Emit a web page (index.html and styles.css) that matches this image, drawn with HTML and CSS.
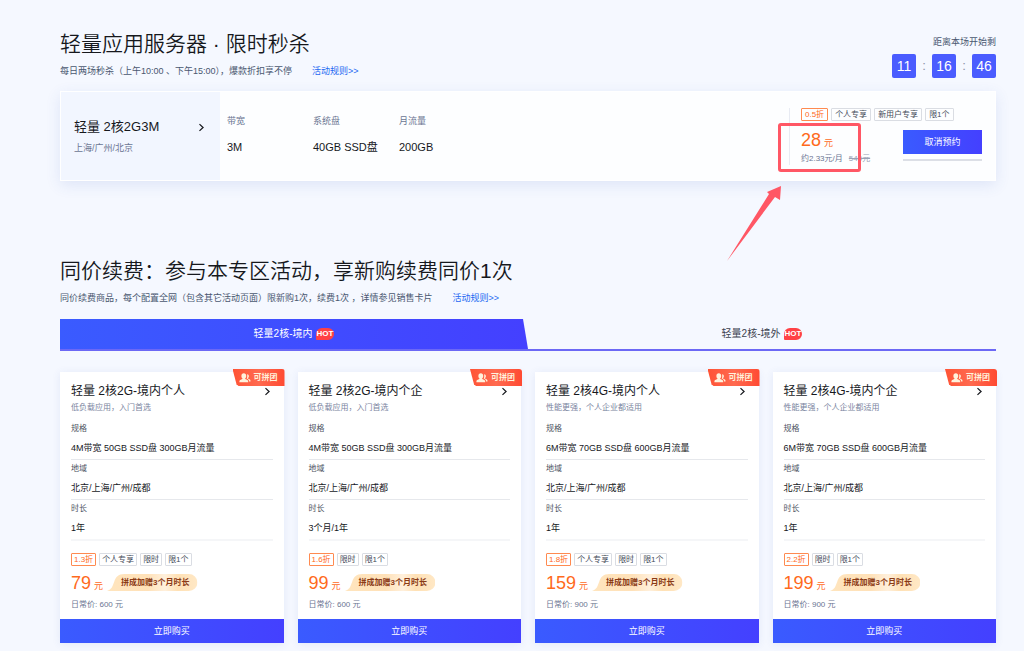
FILE: index.html
```html
<!DOCTYPE html>
<html lang="zh-CN">
<head>
<meta charset="utf-8">
<meta name="viewport" content="width=device-width, initial-scale=1">
<title>轻量应用服务器 · 限时秒杀</title>
<link rel="stylesheet" href="styles.css">
</head>
<body>
<svg class="sprite" aria-hidden="true">
  <symbol id="chevron" viewBox="0 0 8 8"><path d="M2.2 1 5.4 4 2.2 7" fill="none" stroke="currentColor" stroke-width="1.1"/></symbol>
  <symbol id="people" viewBox="0 0 12 10"><path d="M4.8.3c1.5 0 2.4 1.1 2.4 2.6 0 1-.4 1.9-1 2.4v.7c1.700.5 3 1.200 3 2.400v.9H.4v-.9C.4 7.200 1.700 6.500 3.400 6v-.7c-.6-.5-1-1.400-1-2.400C2.400 1.400 3.300.3 4.800.3z"/><path d="M8 1.200c1.200 0 1.900.9 1.900 2 0 .8-.3 1.500-.8 1.900v.6c1.400.4 2.400 1 2.400 2v.9h-1.400c0-1.300-.8-2.300-2.400-3 .6-.9.800-2.600.3-4.400z"/></symbol>
  <symbol id="pill" viewBox="0 0 89 17" preserveAspectRatio="none"><path d="M0 17C5 15 5 13 7 8 8.500 3 11 0 17 0H80.500a8.500 8.500 0 0 1 0 17z" fill="url(#gold)"/></symbol>
  <linearGradient id="gold"><stop offset="0" stop-color="#ffe5be"/><stop offset=".45" stop-color="#ffe1b8"/><stop offset=".64" stop-color="#fff0dc"/><stop offset=".78" stop-color="#ffe1b5"/><stop offset="1" stop-color="#ffe8c6"/></linearGradient>
</svg>
<main class="page">
  <section class="seckill">
    <header class="seckill-head">
      <div>
        <h1 class="title">轻量应用服务器 · 限时秒杀</h1>
        <p class="sub">每日两场秒杀（上午10:00 、下午15:00），爆款折扣享不停<a class="rules" href="#rules">活动规则&gt;&gt;</a></p>
      </div>
      <div class="timer">
        <span class="timer-label">距离本场开始剩</span>
        <div class="clock"><b class="digit">11</b><i class="colon">:</i><b class="digit">16</b><i class="colon">:</i><b class="digit">46</b></div>
      </div>
    </header>
    <article class="deal">
      <a class="deal-name" href="#deal">
        <span class="deal-title">轻量 2核2G3M<svg class="chevron"><use href="#chevron"/></svg></span>
        <span class="deal-place">上海/广州/北京</span>
      </a>
      <dl class="deal-specs">
        <div><dt>带宽</dt><dd>3M</dd></div>
        <div><dt>系统盘</dt><dd>40GB SSD盘</dd></div>
        <div><dt>月流量</dt><dd>200GB</dd></div>
      </dl>
      <div class="deal-buy">
        <div class="tags"><span class="tag hot">0.5折</span><span class="tag">个人专享</span><span class="tag">新用户专享</span><span class="tag">限1个</span></div>
        <div class="deal-row">
          <div>
            <p class="price">28<small>元</small></p>
            <p class="monthly">约2.33元/月<del>540元</del></p>
          </div>
          <div class="reserve"><button class="btn" type="button">取消预约</button><span class="stock"></span></div>
        </div>
        <div class="mark" aria-hidden="true"><svg class="arrow" viewBox="0 0 54 75"><path d="M54 0 53 14 48 11 0 75 42 8 40 6z" fill="#ff5765"/></svg></div>
      </div>
    </article>
  </section>

  <section class="renew">
    <h2 class="title">同价续费：参与本专区活动，享新购续费同价1次</h2>
    <p class="sub">同价续费商品，每个配置全网（包含其它活动页面）限新购1次，续费1次 ，详情参见销售卡片<a class="rules" href="#renew-rules">活动规则&gt;&gt;</a></p>
    <div class="tabs" role="tablist">
      <button class="tab active" type="button" role="tab" aria-selected="true">轻量2核-境内<span class="hot-badge">HOT</span></button>
      <button class="tab" type="button" role="tab" aria-selected="false">轻量2核-境外<span class="hot-badge">HOT</span></button>
    </div>
    <div class="cards">
      <article class="card">
        <span class="ribbon"><svg class="people"><use href="#people"/></svg>可拼团</span>
        <div class="card-body">
          <h3 class="card-title">轻量 2核2G-境内个人<svg class="chevron"><use href="#chevron"/></svg></h3>
          <p class="desc">低负载应用，入门首选</p>
          <dl class="specs">
            <div><dt>规格</dt><dd>4M带宽 50GB SSD盘 300GB月流量</dd></div>
            <div><dt>地域</dt><dd>北京/上海/广州/成都</dd></div>
            <div><dt>时长</dt><dd>1年</dd></div>
          </dl>
          <div class="tags"><span class="tag hot">1.3折</span><span class="tag">个人专享</span><span class="tag">限时</span><span class="tag">限1个</span></div>
          <div class="price-row"><p class="price">79<small>元</small></p><span class="pill"><svg class="pill-bg"><use href="#pill"/></svg><span class="pill-text">拼成加赠3个月时长</span></span></div>
          <p class="daily">日常价: 600 元</p>
        </div>
        <button class="btn" type="button">立即购买</button>
      </article>
      <article class="card">
        <span class="ribbon"><svg class="people"><use href="#people"/></svg>可拼团</span>
        <div class="card-body">
          <h3 class="card-title">轻量 2核2G-境内个企<svg class="chevron"><use href="#chevron"/></svg></h3>
          <p class="desc">低负载应用，入门首选</p>
          <dl class="specs">
            <div><dt>规格</dt><dd>4M带宽 50GB SSD盘 300GB月流量</dd></div>
            <div><dt>地域</dt><dd>北京/上海/广州/成都</dd></div>
            <div><dt>时长</dt><dd>3个月/1年</dd></div>
          </dl>
          <div class="tags"><span class="tag hot">1.6折</span><span class="tag">限时</span><span class="tag">限1个</span></div>
          <div class="price-row"><p class="price">99<small>元</small></p><span class="pill"><svg class="pill-bg"><use href="#pill"/></svg><span class="pill-text">拼成加赠3个月时长</span></span></div>
          <p class="daily">日常价: 600 元</p>
        </div>
        <button class="btn" type="button">立即购买</button>
      </article>
      <article class="card">
        <span class="ribbon"><svg class="people"><use href="#people"/></svg>可拼团</span>
        <div class="card-body">
          <h3 class="card-title">轻量 2核4G-境内个人<svg class="chevron"><use href="#chevron"/></svg></h3>
          <p class="desc">性能更强，个人企业都适用</p>
          <dl class="specs">
            <div><dt>规格</dt><dd>6M带宽 70GB SSD盘 600GB月流量</dd></div>
            <div><dt>地域</dt><dd>北京/上海/广州/成都</dd></div>
            <div><dt>时长</dt><dd>1年</dd></div>
          </dl>
          <div class="tags"><span class="tag hot">1.8折</span><span class="tag">个人专享</span><span class="tag">限时</span><span class="tag">限1个</span></div>
          <div class="price-row"><p class="price">159<small>元</small></p><span class="pill"><svg class="pill-bg"><use href="#pill"/></svg><span class="pill-text">拼成加赠3个月时长</span></span></div>
          <p class="daily">日常价: 900 元</p>
        </div>
        <button class="btn" type="button">立即购买</button>
      </article>
      <article class="card">
        <span class="ribbon"><svg class="people"><use href="#people"/></svg>可拼团</span>
        <div class="card-body">
          <h3 class="card-title">轻量 2核4G-境内个企<svg class="chevron"><use href="#chevron"/></svg></h3>
          <p class="desc">性能更强，个人企业都适用</p>
          <dl class="specs">
            <div><dt>规格</dt><dd>6M带宽 70GB SSD盘 600GB月流量</dd></div>
            <div><dt>地域</dt><dd>北京/上海/广州/成都</dd></div>
            <div><dt>时长</dt><dd>1年</dd></div>
          </dl>
          <div class="tags"><span class="tag hot">2.2折</span><span class="tag">限时</span><span class="tag">限1个</span></div>
          <div class="price-row"><p class="price">199<small>元</small></p><span class="pill"><svg class="pill-bg"><use href="#pill"/></svg><span class="pill-text">拼成加赠3个月时长</span></span></div>
          <p class="daily">日常价: 900 元</p>
        </div>
        <button class="btn" type="button">立即购买</button>
      </article>
    </div>
  </section>
</main>
</body>
</html>
```
FILE: styles.css
```css
* { box-sizing: border-box; margin: 0; padding: 0; }
body {
  background: #f5f8ff;
  color: #16181d;
  font: 9px/14px "Liberation Sans", "Noto Sans CJK SC", sans-serif;
}
a { color: inherit; text-decoration: none; }
button { font: inherit; border: 0; cursor: pointer; }
.sprite { position: absolute; width: 0; height: 0; }
.page { padding: 28px 28px 9px 60px; }

.title {
  font-size: 21px;
  font-weight: 350;
  line-height: 32px;
}
.sub { margin-top: 4px; color: #495770; }
.rules { margin-left: 20px; color: #2468f2; }

.seckill-head { display: flex; justify-content: space-between; }
.timer { display: flex; flex-direction: column; align-items: flex-end; padding-top: 7px; color: #495770; }
.clock { display: flex; align-items: center; margin-top: 5px; }
.digit {
  width: 24px;
  border-radius: 2px;
  background: #4a5cff;
  color: #fff;
  font-size: 14px;
  font-weight: 400;
  line-height: 24px;
  text-align: center;
}
.colon { width: 16px; color: #8a93a8; font-size: 13px; font-style: normal; text-align: center; }

.deal {
  display: flex;
  min-height: 90px;
  margin-top: 13px;
  border: 1px solid #fff;
  background: #fdfeff;
  box-shadow: 0 4px 14px rgba(60, 90, 190, .12);
}
.deal-name { width: 159px; padding: 25px 14px 0 13px; background: #f2f6ff; }
.deal-title { display: flex; align-items: center; justify-content: space-between; font-size: 13px; line-height: 20px; }
.deal-place { display: block; margin-top: 4px; color: #6b7592; }
.chevron { flex: none; width: 9px; height: 9px; }
.deal-specs { display: flex; flex: 1; padding: 22px 0 0 7px; }
.deal-specs div { width: 86px; }
.deal-specs dt { color: #6b7592; }
.deal-specs dd { margin-top: 12px; font-size: 11px; white-space: nowrap; }
.deal-buy { position: relative; align-self: flex-start; margin-top: 16px; padding: 0 13px 0 11px; border-left: 1px solid #e8ebf3; }
.deal-row { display: flex; align-items: flex-start; justify-content: space-between; width: 181px; }
.price { color: #ff6a1c; font-size: 18px; line-height: 18px; }
.price small { margin-left: 3px; font-size: 9px; }
.deal-row .price { margin-top: 10px; }
.monthly { margin-top: 1px; color: #6b7592; font-size: 8px; line-height: 12px; white-space: nowrap; }
.monthly del { margin-left: 6px; color: #9aa2b5; }
.reserve { width: 79px; margin-top: 9px; }
.stock { display: block; height: 2px; margin-top: 5px; background: #dcdfe6; }
.mark { position: absolute; left: -12px; top: 15px; width: 83px; height: 49px; border: 3px solid #ff5765; border-radius: 3px; }
.arrow { position: absolute; right: 77px; top: 60px; width: 54px; height: 75px; }

.tags { display: flex; gap: 3px; }
.tag { padding: 0 3px; border: 1px solid #dadde3; border-radius: 1px; color: #444b59; font-size: 8px; line-height: 11px; white-space: nowrap; }
.tag.hot { border-color: #ff8a50; color: #ff6a1c; }
.btn { display: block; width: 100%; background: linear-gradient(90deg, #3a5bff, #4440ff); color: #fff; line-height: 24px; text-align: center; }

.renew { margin-top: 74px; }
.tabs { display: flex; margin-top: 14px; border-bottom: 2px solid #6c68f5; }
.tab { display: flex; flex: 1; align-items: center; justify-content: center; background: none; color: #3c4250; font-size: 10px; line-height: 30px; }
.tab.active { background: linear-gradient(90deg, #3a5bff, #4440ff); clip-path: polygon(0 0, calc(100% - 5px) 0, 100% 100%, 0 100%); color: #fff; }
.hot-badge { margin-left: 3px; padding: 0 1px; border-radius: 6px 6px 6px 1px; background: #ff4145; color: #fff; font-size: 8px; font-weight: 700; line-height: 12px; }

.cards { display: grid; grid-template-columns: repeat(4, 1fr); gap: 14px; margin-top: 21px; }
.card { position: relative; background: #fff; box-shadow: 0 1px 8px rgba(60, 90, 190, .1); }
.card-body { padding: 10px 11px 8px; }
.card-title { display: flex; align-items: center; justify-content: space-between; font-size: 12px; font-weight: 400; line-height: 18px; padding-right: 1px; }
.desc { margin-top: 2px; color: #7a84a0; font-size: 8px; line-height: 12px; }
.specs { margin-top: 6px; }
.specs div { padding: 3px 0 4px; border-bottom: 1px solid #e6e8ec; }
.specs div:last-child { border-bottom: 2px solid #f5f6f8; }
.specs dt { color: #4d5362; font-size: 8px; line-height: 12px; }
.specs dd { margin-top: 6px; }
.card .tags { margin-top: 12px; }
.card .tag { padding: 0 2px; }
.price-row { display: flex; align-items: flex-start; margin-top: 8px; }
.pill { position: relative; margin-left: 4px; padding: 0 8px 0 14px; color: #8a3a16; font-size: 8px; font-weight: 700; line-height: 17px; white-space: nowrap; }
.pill-bg { position: absolute; inset: 0; width: 100%; height: 100%; }
.pill-text { position: relative; }
.daily { margin-top: 4px; color: #6b7592; font-size: 8px; line-height: 12px; }
.ribbon {
  position: absolute;
  top: -3px;
  right: -1px;
  display: flex;
  align-items: center;
  gap: 3px;
  padding: 0 7px 0 6px;
  border-top-right-radius: 3px;
  background: linear-gradient(90deg, #ff5335, #ff6a50 50%, #ff4a32);
  clip-path: polygon(0 0, 100% 0, 100% 100%, 6px 100%, 4px 90%);
  color: #fff2dc;
  font-size: 8px;
  font-weight: 700;
  line-height: 17px;
}
.people { width: 12px; height: 10px; fill: #fff2dc; }
```
